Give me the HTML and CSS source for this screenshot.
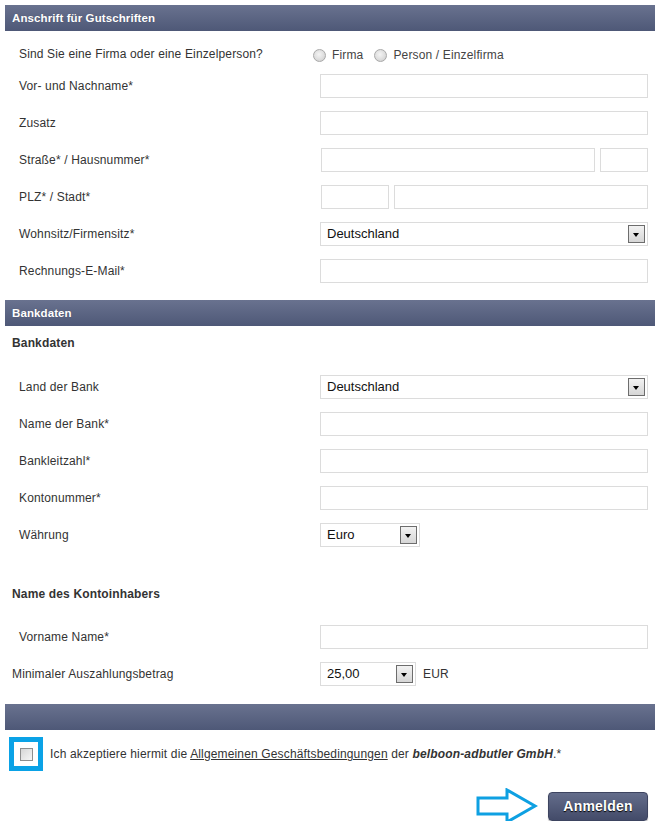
FILE: index.html
```html
<!DOCTYPE html>
<html lang="de">
<head>
<meta charset="utf-8">
<title>Anmeldung</title>
<link rel="stylesheet" href="styles.css">
</head>
<body>
<div class="page">
  <div class="bar">Anschrift für Gutschriften</div>
  <div class="section first">
    <div class="row radio-row">
      <span class="label">Sind Sie eine Firma oder eine Einzelperson?</span>
      <div class="radios">
        <span class="radio"></span><span class="radio-text">Firma</span>
        <span class="radio"></span><span class="radio-text">Person / Einzelfirma</span>
      </div>
    </div>
    <div class="row"><span class="label">Vor- und Nachname*</span><div class="field"><input class="input" type="text"></div></div>
    <div class="row"><span class="label">Zusatz</span><div class="field"><input class="input" type="text"></div></div>
    <div class="row"><span class="label">Straße* / Hausnummer*</span><div class="field split"><input class="input street" type="text"><input class="input house" type="text"></div></div>
    <div class="row"><span class="label">PLZ* / Stadt*</span><div class="field split"><input class="input plz" type="text"><input class="input city" type="text"></div></div>
    <div class="row"><span class="label">Wohnsitz/Firmensitz*</span><div class="field"><div class="select"><span class="select-text">Deutschland</span><span class="select-btn"></span></div></div></div>
    <div class="row"><span class="label">Rechnungs-E-Mail*</span><div class="field"><input class="input" type="text"></div></div>
  </div>

  <div class="bar">Bankdaten</div>
  <div class="section">
    <div class="subhead first-sub">Bankdaten</div>
    <div class="row"><span class="label">Land der Bank</span><div class="field"><div class="select"><span class="select-text">Deutschland</span><span class="select-btn"></span></div></div></div>
    <div class="row"><span class="label">Name der Bank*</span><div class="field"><input class="input" type="text"></div></div>
    <div class="row"><span class="label">Bankleitzahl*</span><div class="field"><input class="input" type="text"></div></div>
    <div class="row"><span class="label">Kontonummer*</span><div class="field"><input class="input" type="text"></div></div>
    <div class="row"><span class="label">Währung</span><div class="field"><div class="select small euro"><span class="select-text">Euro</span><span class="select-btn"></span></div></div></div>
    <div class="subhead second-sub">Name des Kontoinhabers</div>
    <div class="row"><span class="label">Vorname Name*</span><div class="field"><input class="input" type="text"></div></div>
    <div class="row"><span class="label flush">Minimaler Auszahlungsbetrag</span><div class="field inline"><div class="select small amount"><span class="select-text">25,00</span><span class="select-btn"></span></div><span class="unit">EUR</span></div></div>
  </div>

  <div class="bar empty"></div>
  <div class="terms">
    <span class="check-wrap"><span class="check"></span></span>
    <span class="terms-text">Ich akzeptiere hiermit die <a href="#">Allgemeinen Geschäftsbedingungen</a> der <b><i>belboon-adbutler GmbH</i></b>.*</span>
  </div>
  <div class="actions">
    <svg class="arrow" width="62" height="36" viewBox="0 0 62 36" aria-hidden="true">
      <path d="M2 10 H31 V2 L59 18 L31 34 V26 H2 Z" fill="none" stroke="#0ea0e2" stroke-width="3" stroke-linejoin="miter"/>
    </svg>
    <button class="btn" type="button">Anmelden</button>
  </div>
</div>
</body>
</html>
```
FILE: styles.css
```css
html, body {
  margin: 0;
  padding: 0;
  background: #fff;
}
body {
  font-family: "Liberation Sans", Arial, sans-serif;
  font-size: 12px;
  letter-spacing: 0.15px;
  color: #333;
}
.page {
  padding: 5px 4px 0 5px;
  width: 650px;
}
.bar {
  height: 26px;
  line-height: 26px;
  padding-left: 7px;
  background: linear-gradient(#69728f, #4e5877);
  color: #fff;
  font-weight: bold;
  font-size: 11.5px;
  letter-spacing: 0.1px;
  text-shadow: 0 0 1px rgba(0,0,0,0.25);
}
.section.first {
  padding-top: 10px;
  padding-bottom: 11px;
}
.row {
  display: grid;
  grid-template-columns: 315px 328px;
  height: 37px;
  align-items: center;
}
.radio-row {
  height: 26px;
}
.label {
  padding-left: 14px;
  line-height: 16px;
}
.label.flush {
  padding-left: 7px;
}
.radios {
  display: flex;
  align-items: center;
  margin-left: -7px;
  padding-top: 2px;
}
.radio {
  width: 11px;
  height: 11px;
  border-radius: 50%;
  border: 1px solid #a9a9a9;
  background: radial-gradient(circle at 45% 40%, #f4f4f4 0, #dcdcdc 60%, #c4c4c4 100%);
  box-sizing: content-box;
}
.radio-text {
  margin-left: 6px;
  margin-right: 11px;
  color: #444;
}
.field {
  display: flex;
  align-items: center;
}
.input {
  display: block;
  width: 100%;
  height: 24px;
  box-sizing: border-box;
  border: 1px solid #dcdcdc;
  background: #fff;
  margin: 0;
  padding: 0 4px;
  font: inherit;
}
.split {
  gap: 5px;
  padding-left: 1px;
}
.street { width: 274px; flex: none; }
.house { flex: 1; }
.plz { width: 68px; flex: none; }
.city { flex: 1; }
.select {
  display: flex;
  align-items: center;
  justify-content: space-between;
  width: 100%;
  height: 24px;
  box-sizing: border-box;
  border: 1px solid #dcdcdc;
  padding: 0 2px 0 6px;
  background: #fff;
}
.select.euro { width: 100px; }
.select.amount { width: 96px; flex: none; }
.select-text {
  font-size: 13px;
  letter-spacing: 0;
  color: #111;
}
.select-btn {
  width: 15px;
  height: 16px;
  border: 1px solid #6d6d6d;
  background: linear-gradient(#f2f2f2, #d6d6d6);
  position: relative;
  box-sizing: content-box;
}
.select-btn::after {
  content: "";
  position: absolute;
  left: 4px;
  top: 7px;
  border-left: 3.5px solid transparent;
  border-right: 3.5px solid transparent;
  border-top: 4px solid #000;
}
.inline .unit {
  margin-left: 7px;
  color: #333;
}
.subhead {
  font-weight: bold;
  line-height: 16px;
  padding-left: 7px;
}
.first-sub {
  padding-top: 9px;
  padding-bottom: 17px;
}
.second-sub {
  padding-top: 33px;
  padding-bottom: 16px;
}
.section:not(.first) {
  padding-bottom: 12px;
}
.terms {
  display: flex;
  align-items: center;
  margin-top: 7px;
  padding-left: 4px;
}
.check-wrap {
  width: 24px;
  height: 24px;
  border: 5px solid #0aa2e6;
  display: flex;
  align-items: center;
  justify-content: center;
  box-sizing: content-box;
}
.check {
  width: 11px;
  height: 11px;
  border: 1px solid #8e8e8e;
  background: linear-gradient(135deg, #d6d6d6, #f6f6f6);
}
.terms-text {
  margin-left: 7px;
  color: #333;
}
.terms-text a {
  color: #333;
  text-decoration: underline;
}
.actions {
  display: flex;
  justify-content: flex-end;
  align-items: center;
  gap: 10px;
  margin-top: 17px;
  padding-right: 7px;
}
.arrow {
  display: block;
}
.btn {
  width: 100px;
  height: 29px;
  border: 1px solid #3d4460;
  border-radius: 4px;
  background: linear-gradient(#646d8b, #434b69);
  color: #fff;
  font-family: "Liberation Sans", Arial, sans-serif;
  font-weight: bold;
  font-size: 14px;
  letter-spacing: 0.2px;
  text-shadow: 0 1px 1px #000;
  box-shadow: 0 1px 1px rgba(0,0,0,0.3);
  padding: 0;
}
```
